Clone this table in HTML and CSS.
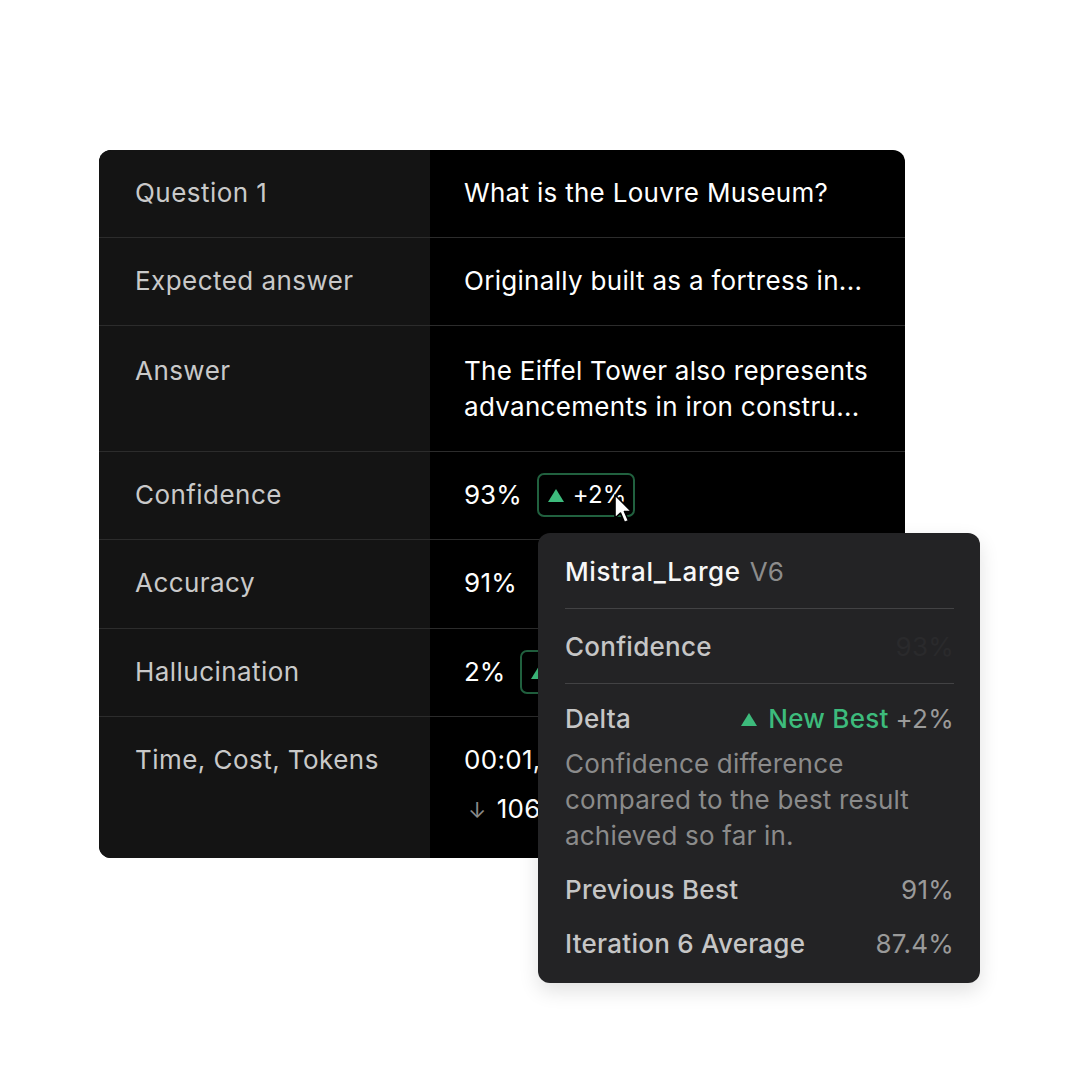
FILE: index.html
```html
<!DOCTYPE html>
<html lang="en">
<head>
    <meta charset="UTF-8">
    <meta name="viewport" content="width=device-width, initial-scale=1.0">
    <title>Evaluation - Question 1</title>
    <link rel="stylesheet" href="styles.css">
</head>
<body>
    <div class="stage">
        <div class="table">
            <div class="row">
                <div class="label">Question 1</div>
                <div class="value">What is the Louvre Museum?</div>
            </div>
            <div class="row">
                <div class="label">Expected answer</div>
                <div class="value">Originally built as a fortress in...</div>
            </div>
            <div class="row row-tall">
                <div class="label">Answer</div>
                <div class="value">The Eiffel Tower also represents<br>advancements in iron constru...</div>
            </div>
            <div class="row">
                <div class="label">Confidence</div>
                <div class="value value-badge">93%<span class="badge"><span class="tri"></span>+2%</span></div>
            </div>
            <div class="row row-89">
                <div class="label">Accuracy</div>
                <div class="value">91%</div>
            </div>
            <div class="row">
                <div class="label">Hallucination</div>
                <div class="value value-badge">2%<span class="badge"><span class="tri"></span>+1%</span></div>
            </div>
            <div class="row row-last">
                <div class="label">Time, Cost, Tokens</div>
                <div class="value">
                    <div class="line">00:01, $0.004</div>
                    <div class="line"><span class="arrow">↓</span>1062</div>
                </div>
            </div>
        </div>

        <!-- cursor over the badge -->
        <svg class="cursor" width="24" height="36" viewBox="0 0 24 36">
            <path d="M2 2 L2 25 L7.5 20 L11.5 29.5 L15.5 27.8 L11.5 18.5 L18.5 18.5 Z" fill="#fff" stroke="#000" stroke-width="1.6" stroke-linejoin="round"/>
        </svg>

        <div class="tooltip">
            <div class="tip-head">
                <span class="model">Mistral_Large</span>
                <span class="ver">V6</span>
            </div>
            <div class="tip-row tip-conf">
                <span>Confidence</span>
                <span class="faint">93%</span>
            </div>
            <div class="tip-delta">
                <div class="tip-row">
                    <span>Delta</span>
                    <span class="delta-val"><span class="best"><span class="tri"></span>New Best</span><span class="muted">+2%</span></span>
                </div>
                <p class="desc">Confidence difference compared to the best result achieved so far in.</p>
            </div>
            <div class="tip-row">
                <span>Previous Best</span>
                <span class="muted">91%</span>
            </div>
            <div class="tip-row">
                <span>Iteration 6 Average</span>
                <span class="muted">87.4%</span>
            </div>
        </div>
    </div>
</body>
</html>
```

FILE: styles.css
```css
* {
    margin: 0;
    padding: 0;
    box-sizing: border-box;
}
body {
    font-family: 'Inter', 'Noto Sans', sans-serif;
    background: #ffffff;
    width: 1080px;
    height: 1080px;
}
.stage {
    position: relative;
    padding: 150px 0 0 99px;
}
.table {
    width: 806px;
    border-radius: 12px;
    overflow: hidden;
    background: #000;
}
.row {
    display: flex;
    border-bottom: 1px solid #2c2c2c;
}
.label {
    width: 331px;
    background-color: #141414;
    color: #c9c9c9;
    font-size: 26px;
    line-height: 36px;
    padding: 25px 36px 26px;
    letter-spacing: 0.45px;
}
.value {
    flex: 1;
    color: #ffffff;
    font-size: 26px;
    line-height: 36px;
    padding: 25px 34px 26px;
    white-space: nowrap;
    letter-spacing: 0.3px;
}
.value-badge {
    display: flex;
    align-items: center;
    letter-spacing: 0;
}
.row-tall .value,
.row-tall .label {
    padding-top: 27px;
    padding-bottom: 26px;
}
.row-89 .label,
.row-89 .value {
    padding-bottom: 27px;
}
.row-last {
    border-bottom: none;
}
.row-last .label,
.row-last .value {
    height: 141px;
}
.row-last .line + .line {
    margin-top: 13px;
}
.arrow {
    color: #8a8a8a;
    font-size: 22px;
    margin: 0 10px 0 4px;
}
.badge {
    display: inline-flex;
    align-items: center;
    gap: 9px;
    height: 44px;
    margin: -4px 0 -4px 15px;
    padding: 0 6px 0 9px;
    border: 2px solid #21613f;
    border-radius: 7px;
    font-size: 24px;
    letter-spacing: 0.2px;
}
.tri {
    display: inline-block;
    width: 0;
    height: 0;
    border-left: 8px solid transparent;
    border-right: 8px solid transparent;
    border-bottom: 13px solid #3dbb7c;
}
.cursor {
    position: absolute;
    left: 613px;
    top: 493px;
}
.tooltip {
    position: absolute;
    left: 538px;
    top: 533px;
    width: 442px;
    height: 450px;
    background-color: #232325;
    border-radius: 12px;
    padding: 21px 26px 22px 27px;
    box-shadow: 0 8px 20px rgba(0, 0, 0, 0.12);
    font-size: 26px;
    line-height: 36px;
    font-weight: 500;
    color: #c6c6c6;
    letter-spacing: 0.25px;
}
.tip-head {
    padding-bottom: 18px;
    border-bottom: 1px solid #424244;
}
.model {
    color: #f7f7f7;
    letter-spacing: 0.6px;
}
.ver {
    color: #8c8c8c;
    font-weight: 400;
    margin-left: 2px;
}
.tip-row {
    display: flex;
    justify-content: space-between;
    align-items: center;
}
.tip-conf {
    padding: 20px 0 18px;
    border-bottom: 1px solid #424244;
}
.faint {
    color: #2a2a2c;
    font-weight: 400;
}
.tip-delta {
    padding-top: 17px;
}
.delta-val {
    font-weight: 400;
}
.best {
    color: #3dbb7c;
    font-weight: 500;
    margin-right: 7px;
}
.best .tri {
    margin-right: 11px;
    vertical-align: 2px;
}
.muted {
    color: #9a9a9a;
    font-weight: 400;
}
.desc {
    margin-top: 9px;
    color: #8b8b8b;
    font-weight: 400;
    width: 380px;
    letter-spacing: 0.2px;
}
.tip-delta + .tip-row {
    margin-top: 18px;
}
.tip-row + .tip-row {
    margin-top: 18px;
}
```
